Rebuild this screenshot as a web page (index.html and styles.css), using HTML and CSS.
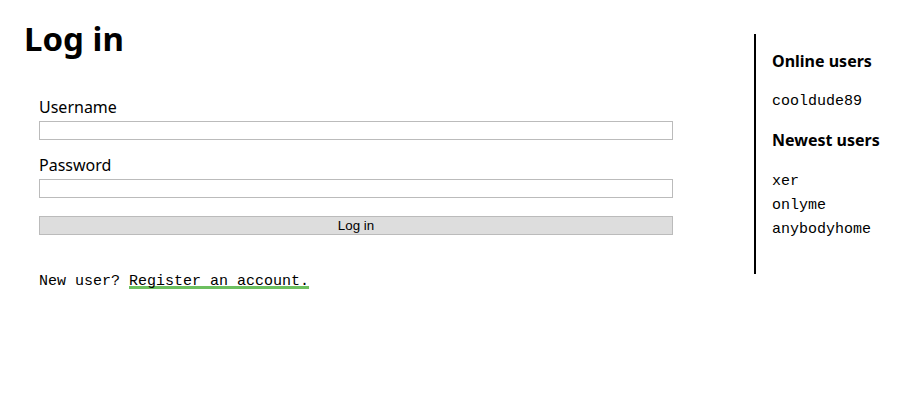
FILE: index.html
```html
<!DOCTYPE html>
<html lang="en">
<head>
  <meta charset="UTF-8" />
  <title>Log in</title>
  <link rel="stylesheet" href="styles.css">
</head>
<body>

<main class="content">
  <h1>Log in</h1>

  <form class="login-form">
    <label for="username">Username</label>
    <input type="text" id="username" name="username" />

    <label for="password">Password</label>
    <input type="password" id="password" name="password" />

    <button type="submit">Log in</button>
  </form>

  <p class="register">New user? <a href="#">Register an account.</a></p>
</main>

<aside class="sidebar">
  <h3>Online users</h3>
  <ul class="users">
    <li>cooldude89</li>
  </ul>

  <h3>Newest users</h3>
  <ul class="users">
    <li>xer</li>
    <li>onlyme</li>
    <li>anybodyhome</li>
  </ul>
</aside>

</body>
</html>
```

FILE: styles.css
```css
body {
  margin: 0;
  font-family: 'Noto Sans', sans-serif;
  color: #000;
  background: white;
  display: flex;
  align-items: flex-start;
}

.content {
  flex: 1;
  padding: 19px 66px 0 24px;
}

h1 {
  margin: 0;
  font-size: 33px;
  line-height: 40px;
  font-weight: 700;
}

.login-form {
  display: flex;
  flex-direction: column;
  padding: 38px 15px 0;
}

.login-form label {
  font-size: 16px;
  line-height: 20px;
  margin-bottom: 4px;
}

.login-form input {
  box-sizing: border-box;
  width: 100%;
  height: 19px;
  margin: 0 0 15px;
  padding: 0 3px;
  border: 1px solid #bbb;
  background: white;
  font-size: 13px;
}

.login-form input[type="password"] {
  margin-bottom: 18px;
}

button {
  box-sizing: border-box;
  width: 100%;
  height: 19px;
  padding: 0;
  border: 1px solid #bbb;
  background: #ddd;
  color: #000;
  font-family: 'Liberation Sans', Arial, sans-serif;
  font-size: 13.33px;
  line-height: 17px;
  cursor: pointer;
}

.register {
  margin: 38px 15px 0;
  font-family: 'Liberation Mono', monospace;
  font-size: 15px;
  line-height: 17px;
}

.register a {
  color: #000;
  text-decoration: underline;
  text-decoration-color: #6cbf5f;
  text-decoration-thickness: 3px;
  text-underline-offset: 1px;
  text-decoration-skip-ink: none;
}

.sidebar {
  flex: 0 0 169px;
  box-sizing: border-box;
  margin-top: 34px;
  padding: 17px 0 32px 16px;
  border-left: 2px solid #000;
}

.sidebar h3 {
  margin: 0;
  font-size: 16px;
  line-height: 20px;
  font-weight: 700;
}

.users {
  list-style: none;
  margin: 19px 0 16px;
  padding: 0;
  font-family: 'Liberation Mono', monospace;
  font-size: 15px;
  line-height: 24px;
}

.users:last-child {
  margin: 20px 0 0;
}
```
